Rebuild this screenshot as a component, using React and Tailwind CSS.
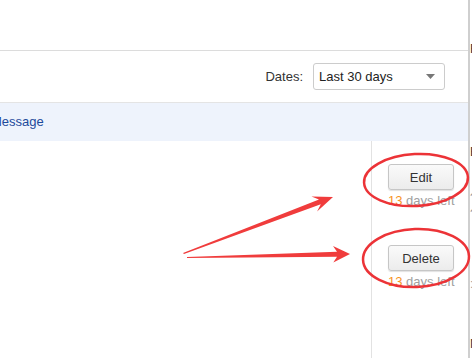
import React from "react";

function Btn({ children }) {
  return (
    <button className="w-[66px] h-[26px] rounded-[3px] border border-[#c6c6c6] bg-gradient-to-b from-[#fafafa] to-[#ececec] shadow-[0_1px_1px_rgba(0,0,0,0.12)] text-[13px] text-[#333] leading-none">
      {children}
    </button>
  );
}

function DaysLeft() {
  return (
    <div className="mt-[3px] text-[13px] leading-[16px] whitespace-nowrap">
      <span className="text-[#f7931e]">13</span>
      <span className="text-[#a0a0a0]"> days left</span>
    </div>
  );
}

export default function App() {
  return (
    <div
      className="relative w-[472px] h-[358px] overflow-hidden bg-white flex"
      style={{ fontFamily: '"Liberation Sans", Arial, sans-serif' }}
    >
      <div className="w-[468px] flex flex-col">
        <div className="h-[51px] border-b border-[#dcdcdc] shrink-0" />
        <div className="h-[52px] shrink-0 flex items-center justify-end pr-[23px] border-b border-[#e4e4e4]">
          <span className="text-[13px] text-[#333] mr-[10px]">Dates:</span>
          <div className="w-[132px] h-[27px] rounded-[3px] border border-[#cccccc] flex items-center justify-between pl-[5px] pr-[9px] text-[13px] text-[#222]">
            <span>Last 30 days</span>
            <svg width="9" height="5" viewBox="0 0 9 5">
              <path d="M0 0 L9 0 L4.5 5 Z" fill="#777" />
            </svg>
          </div>
        </div>
        <div className="h-[38px] shrink-0 bg-[#eef3fc] flex items-center">
          <span className="ml-[-9px] text-[13px] text-[#1d4a9b]">Message</span>
        </div>
        <div className="flex-1 flex">
          <div className="w-[372px] border-r border-[#e2e2e2]" />
          <div className="flex-1 pl-[16px] pt-[23px] flex flex-col">
            <Btn>Edit</Btn>
            <DaysLeft />
            <div className="h-[36px]" />
            <Btn>Delete</Btn>
            <DaysLeft />
          </div>
        </div>
      </div>
      <div className="w-[2px] bg-[#cfcfcf]" />
      <div className="w-[2px] overflow-hidden flex flex-col text-[13px] leading-[16px] text-[#333]">
        <span className="mt-[41px]">F</span>
        <span className="mt-[87px]">E</span>
        <span className="mt-[30px] text-[#999]">?</span>
        <span className="mt-[0px] text-[#999]">?</span>
        <span className="mt-[54px] text-[#999]">:</span>
        <span className="mt-[44px]">M</span>
      </div>

      <svg
        className="absolute inset-0 pointer-events-none"
        width="472"
        height="358"
        viewBox="0 0 472 358"
      >
        <ellipse cx="416" cy="180" rx="52" ry="26" fill="none" stroke="#ec3337" strokeWidth="2.5" transform="rotate(-3 416 180)" />
        <ellipse cx="416" cy="258" rx="53" ry="29" fill="none" stroke="#ec3337" strokeWidth="2.5" transform="rotate(-2 416 258)" />
        <polygon
          points="183,253 319,199.6 311.5,196.5 333,197 317.1,211.5 320.8,204.2 184,254"
          fill="#f03c3c"
        />
        <polygon
          points="187,257 337,251.7 333,246 350,254 333.3,262.5 337,256.7 187,258"
          fill="#f03c3c"
        />
      </svg>
    </div>
  );
}
